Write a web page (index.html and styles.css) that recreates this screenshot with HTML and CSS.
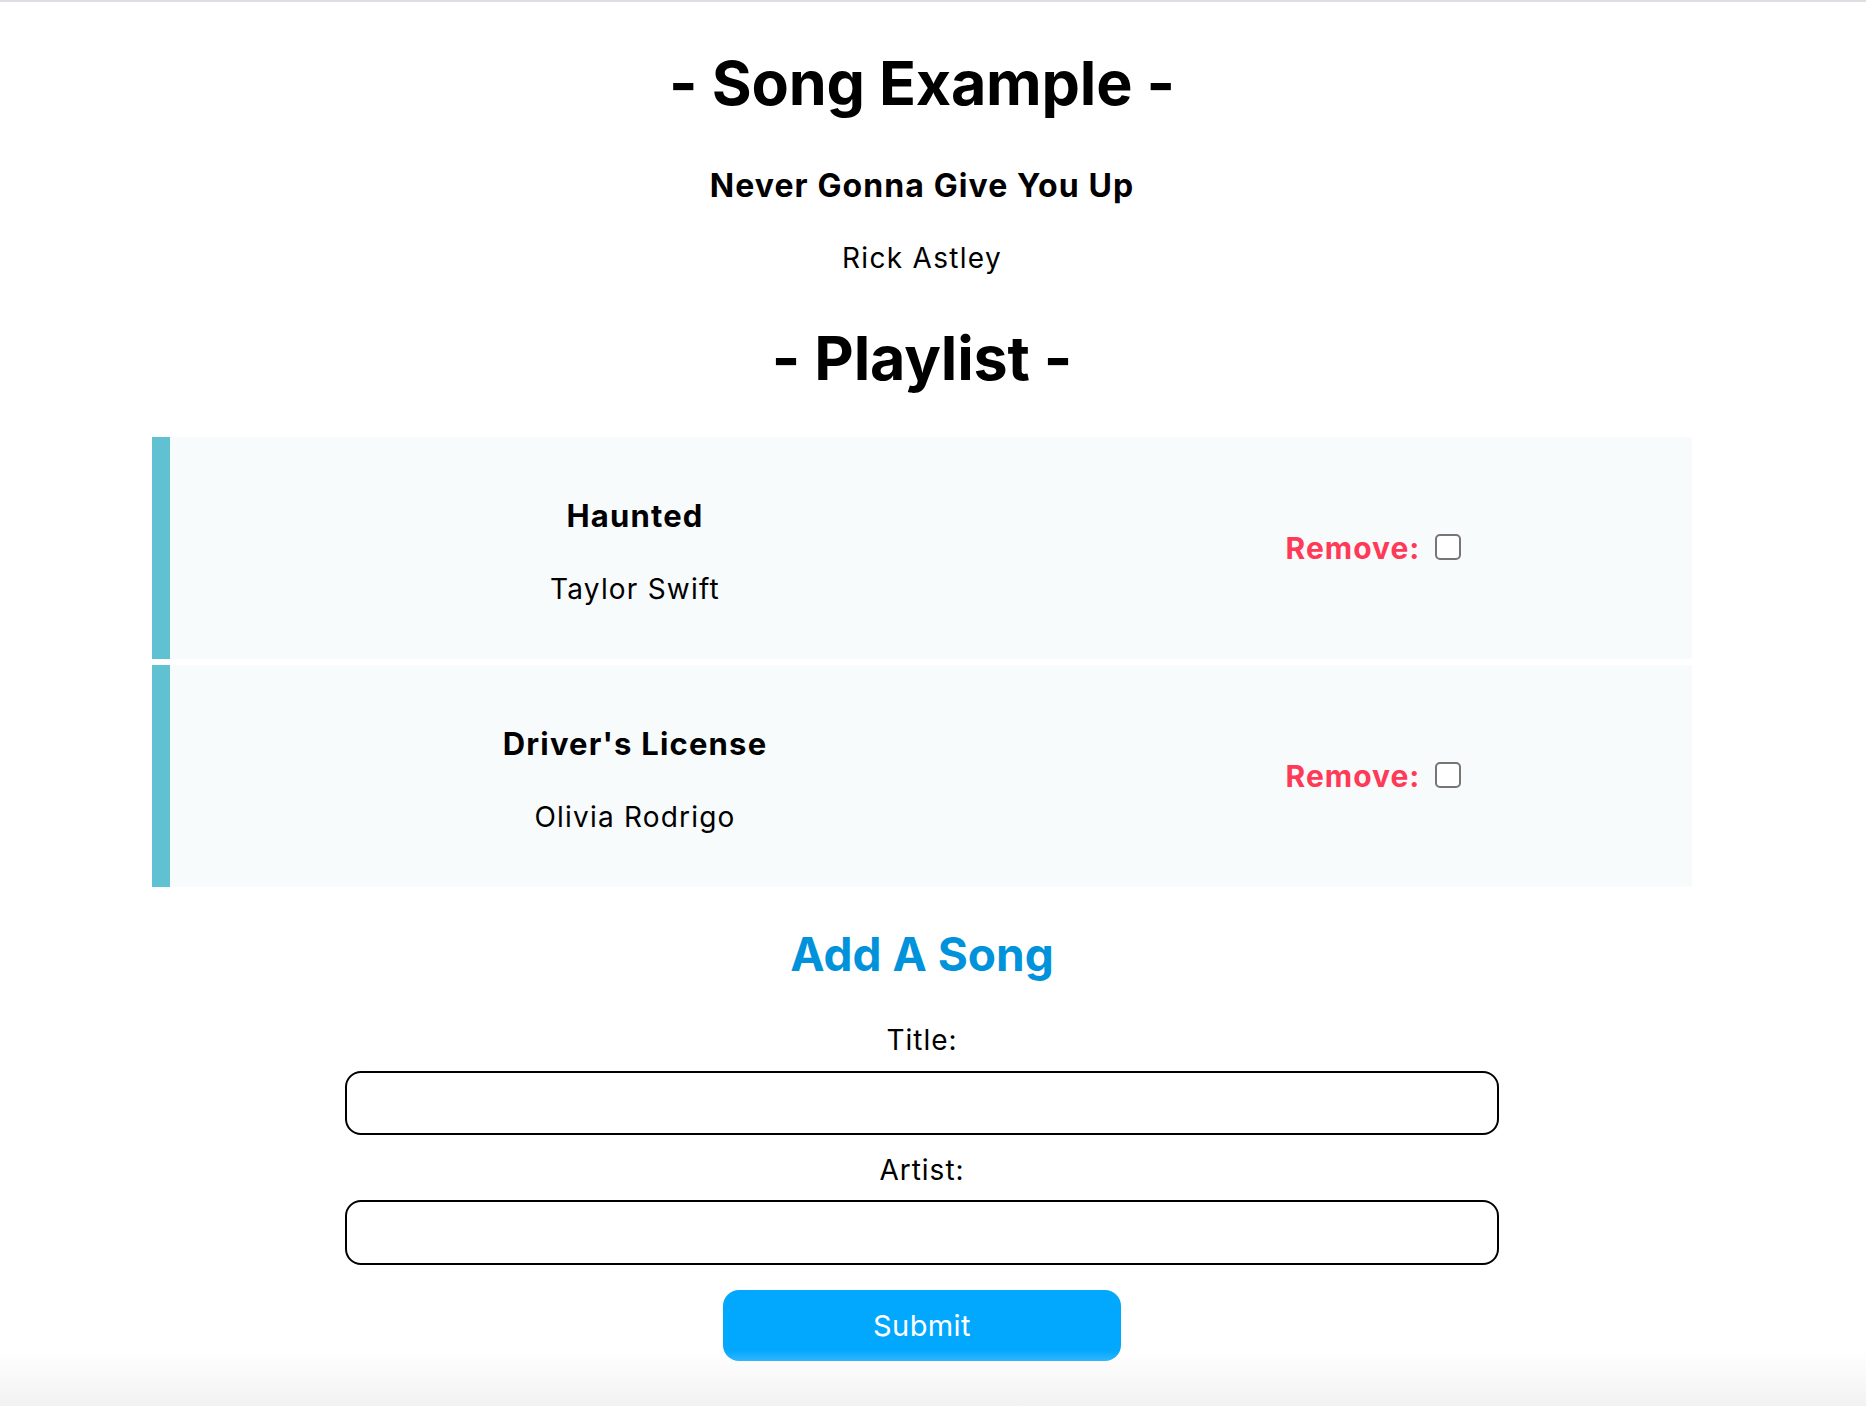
FILE: index.html
```html
<!DOCTYPE html>
<html lang="en">
<head>
<meta charset="utf-8">
<title>Song Example</title>
<link rel="stylesheet" href="styles.css">
</head>
<body>
<div class="topline"></div>
<main class="page">
  <h1 class="heading heading-song">- Song Example -</h1>
  <h3 class="song-title">Never Gonna Give You Up</h3>
  <p class="song-artist">Rick Astley</p>

  <h1 class="heading heading-playlist">- Playlist -</h1>

  <section class="playlist">
    <div class="card">
      <div class="card-info">
        <h3 class="card-title">Haunted</h3>
        <p class="card-artist">Taylor Swift</p>
      </div>
      <label class="remove">
        <span class="remove-text">Remove:</span>
        <input type="checkbox" class="remove-box">
      </label>
    </div>
    <div class="card">
      <div class="card-info">
        <h3 class="card-title">Driver's License</h3>
        <p class="card-artist">Olivia Rodrigo</p>
      </div>
      <label class="remove">
        <span class="remove-text">Remove:</span>
        <input type="checkbox" class="remove-box">
      </label>
    </div>
  </section>

  <form class="add-form">
    <h2 class="add-heading">Add A Song</h2>
    <label class="field-label" for="title">Title:</label>
    <input class="field-input field-title" id="title" type="text">
    <label class="field-label field-label-artist" for="artist">Artist:</label>
    <input class="field-input field-artist" id="artist" type="text">
    <button class="submit" type="button">Submit</button>
  </form>
</main>
<div class="bottom-fade"></div>
</body>
</html>
```

FILE: styles.css
```css
* { box-sizing: border-box; }

html, body {
  margin: 0;
  padding: 0;
  background: #ffffff;
}

body {
  font-family: "Inter", "Noto Sans", "Liberation Sans", sans-serif;
  color: #000000;
}

.topline {
  height: 2px;
  background: #dcdfe3;
}

.page {
  width: 1844px;
  display: flex;
  flex-direction: column;
  align-items: center;
  text-align: center;
}

.heading {
  margin: 0;
  font-size: 61px;
  line-height: 1;
  font-weight: 700;
  letter-spacing: -0.2px;
}

.heading-song { margin-top: 51px; }

.song-title {
  margin: 56px 0 0;
  font-size: 32px;
  line-height: 1;
  font-weight: 700;
  letter-spacing: 1.1px;
}

.song-artist {
  margin: 42px 0 0;
  font-size: 28px;
  line-height: 1;
  letter-spacing: 1.3px;
}

.heading-playlist { margin-top: 56px; }

.playlist {
  margin-top: 48px;
  width: 1540px;
  display: flex;
  flex-direction: column;
  gap: 6px;
}

.card {
  height: 222px;
  background: #f7fbfc;
  border-left: 18px solid #5fc1d2;
  display: grid;
  grid-template-columns: 930px 547px;
  align-items: center;
}

.card-info {
  display: flex;
  flex-direction: column;
  align-items: center;
  gap: 44px;
  padding-top: 6px;
}

.card-title {
  margin: 0;
  font-size: 31px;
  line-height: 1;
  font-weight: 700;
  letter-spacing: 1.2px;
}

.card-artist {
  margin: 0;
  font-size: 28px;
  line-height: 1;
  letter-spacing: 1.2px;
}

.remove {
  display: flex;
  align-items: center;
  justify-content: center;
  gap: 15px;
}

.remove-text {
  font-size: 30px;
  line-height: 1;
  font-weight: 700;
  color: #ff3a57;
  letter-spacing: 1px;
}

.remove-box {
  appearance: none;
  -webkit-appearance: none;
  margin: 0;
  width: 26px;
  height: 26px;
  border: 2px solid #767676;
  border-radius: 5px;
  background: #ffffff;
  position: relative;
  top: -1px;
}

.add-form {
  margin-top: 44px;
  display: flex;
  flex-direction: column;
  align-items: center;
}

.add-heading {
  margin: 0;
  font-size: 46px;
  line-height: 1;
  font-weight: 700;
  color: #0092da;
}

.field-label {
  margin-top: 49px;
  font-size: 28px;
  line-height: 1;
  letter-spacing: 1px;
}

.field-label-artist { margin-top: 21px; }

.field-input {
  margin-top: 17px;
  width: 1154px;
  height: 64px;
  border: 2px solid #000000;
  border-radius: 16px;
  background: #ffffff;
  font-family: inherit;
  font-size: 28px;
  padding: 0 16px;
}

.field-artist { margin-top: 16px; height: 65px; }

.submit {
  margin-top: 25px;
  width: 398px;
  height: 71px;
  border: none;
  border-radius: 16px;
  background: #02a8fe;
  color: #ffffff;
  font-family: "Inter", "Liberation Sans", sans-serif;
  font-size: 29px;
  font-weight: 400;
  letter-spacing: 0.4px;
}

.bottom-fade {
  position: fixed;
  left: 0;
  right: 0;
  bottom: 0;
  height: 56px;
  background: linear-gradient(to bottom, rgba(243, 243, 243, 0), #f2f2f2);
  pointer-events: none;
}
```
